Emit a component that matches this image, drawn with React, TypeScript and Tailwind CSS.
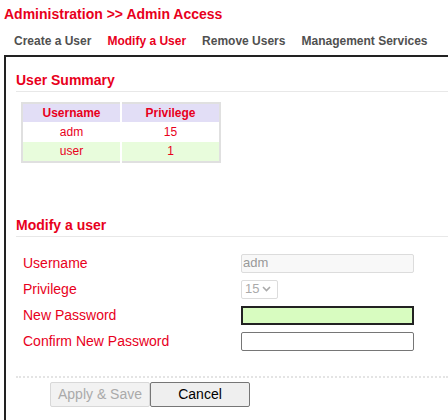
import React from "react";

const red = "text-[#e8001c]";

const tabs = [
    { label: "Create a User", active: false },
    { label: "Modify a User", active: true },
    { label: "Remove Users", active: false },
    { label: "Management Services", active: false },
];

const users = [
    { name: "adm", privilege: "15" },
    { name: "user", privilege: "1" },
];

function SectionTitle({ children }: { children: React.ReactNode }) {
    return (
        <div className="border-b border-[#e8e8e8] pb-[3px]">
            <h2 className={`text-[14px] font-bold leading-[16px] ${red}`}>{children}</h2>
        </div>
    );
}

function FieldRow({ label, children }: { label: string; children: React.ReactNode }) {
    return (
        <div className="flex h-[26px] items-center">
            <label className={`w-[218px] text-[14px] ${red}`}>{label}</label>
            {children}
        </div>
    );
}

export default function App() {
    const [password, setPassword] = React.useState("");
    const [confirm, setConfirm] = React.useState("");

    return (
        <div className="h-[420px] w-[448px] overflow-hidden bg-white font-['Liberation_Sans',Arial,sans-serif]">
            <h1 className={`pl-[4px] pt-[6px] text-[14px] font-bold leading-[17px] ${red}`}>
                Administration &gt;&gt; Admin Access
            </h1>
            <div className="flex gap-[16px] pl-[14px] pt-[11px] text-[12px] font-bold leading-[14px]">
                {tabs.map((t) => (
                    <span key={t.label} className={t.active ? red : "text-[#505050]"}>
                        {t.label}
                    </span>
                ))}
            </div>
            <div className="ml-[4px] mt-[7px] h-[400px] border-l-2 border-t-2 border-[#222] pl-[10px] pr-0 pt-[15px]">
                <SectionTitle>User Summary</SectionTitle>
                <table className="ml-[5px] mt-[10px] w-[200px] border-collapse border-2 border-[#e0e0e0] text-center text-[12px] leading-[17px]">
                    <thead>
                        <tr className="bg-[#e2def6]">
                            <th className={`h-[19px] w-[99px] border-r-2 border-white font-bold ${red}`}>Username</th>
                            <th className={`font-bold ${red}`}>Privilege</th>
                        </tr>
                    </thead>
                    <tbody>
                        {users.map((u, i) => (
                            <tr key={u.name} className={i % 2 ? "bg-[#e8fcdc]" : "bg-white"}>
                                <td className={`h-[20px] border-r-2 border-white ${red}`}>{u.name}</td>
                                <td className={red}>{u.privilege}</td>
                            </tr>
                        ))}
                    </tbody>
                </table>

                <div className="mt-[54px]">
                    <SectionTitle>Modify a user</SectionTitle>
                </div>

                <div className="mt-[13px] pl-[7px]">
                    <FieldRow label="Username">
                        <input
                            disabled
                            value="adm"
                            className="h-[19px] w-[173px] rounded-[2px] border border-[#dcdcdc] bg-[#f8f8f8] px-[1px] text-[13px] text-[#999]"
                        />
                    </FieldRow>
                    <FieldRow label="Privilege">
                        <div className="flex h-[19px] w-[37px] items-center gap-[3px] rounded-[2px] border border-[#dcdcdc] px-[3px] text-[13px] text-[#aaa]">
                            <span>15</span>
                            <svg width="9" height="6" viewBox="0 0 9 6" fill="none" stroke="#aaa" strokeWidth="1.6">
                                <path d="M1 1l3.5 3.5L8 1" />
                            </svg>
                        </div>
                    </FieldRow>
                    <FieldRow label="New Password">
                        <input
                            type="password"
                            value={password}
                            onChange={(e) => setPassword(e.target.value)}
                            className="h-[19px] w-[173px] border-2 border-[#222] bg-[#d8fcc0] outline-none"
                        />
                    </FieldRow>
                    <FieldRow label="Confirm New Password">
                        <input
                            type="password"
                            value={confirm}
                            onChange={(e) => setConfirm(e.target.value)}
                            className="h-[19px] w-[173px] rounded-[2px] border border-[#767676] bg-white outline-none"
                        />
                    </FieldRow>
                </div>

                <div className="mt-[22px] border-t-2 border-dotted border-[#e4e4e4] pl-[34px] pt-[4px]">
                    <div className="flex">
                        <button
                            disabled
                            className="h-[25px] w-[100px] rounded-[2px] border border-[#d8d8d8] bg-[#f2f2f2] text-[14px] text-[#aaa]"
                        >
                            Apply &amp; Save
                        </button>
                        <button className="h-[25px] w-[100px] rounded-[2px] border border-[#767676] bg-[#efefef] text-[14px] text-black">
                            Cancel
                        </button>
                    </div>
                </div>
            </div>
        </div>
    );
}
